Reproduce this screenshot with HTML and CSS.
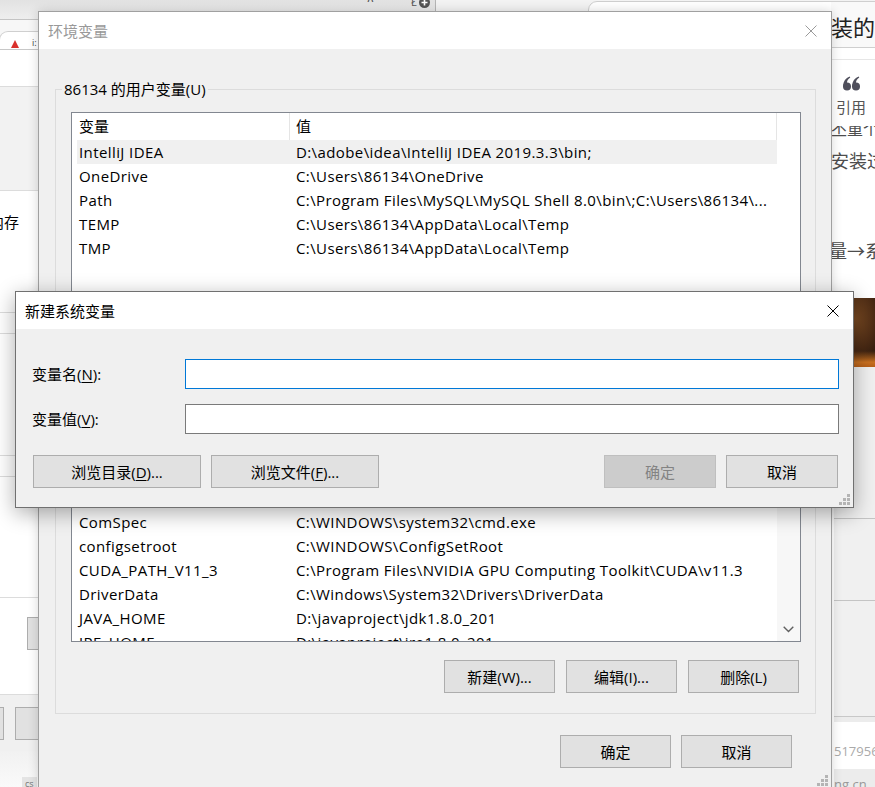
FILE: index.html
```html
<!DOCTYPE html>
<html lang="zh-CN">
<head>
<meta charset="utf-8">
<title>环境变量</title>
<link rel="stylesheet" href="styles.css">
</head>
<body>
<div class="bg-left">
  <div class="bl-top"><span class="bl-caret">∧</span><span class="bl-i">Ł</span><span class="bl-plus"><svg width="11" height="11" viewBox="0 0 11 11"><circle cx="5.5" cy="5.5" r="5.5" fill="#555"/><path d="M5.5 2.5v6M2.5 5.5h6" stroke="#fff" stroke-width="1.6"/></svg></span></div>
  <div class="bl-gap"></div>
  <div class="bl-tabrow"><div class="bl-tab"><svg class="bl-ico" width="8" height="8" viewBox="0 0 8 8"><path d="M4 0L8 8H0z" fill="#d9302c"/></svg><span class="bl-tabtxt">i:</span></div></div>
  <div class="bl-white1"></div>
  <div class="bl-gray1"></div>
  <div class="bl-sec1"><span class="bl-mem">内存</span></div>
  <div class="bl-thin"></div>
  <div class="bl-sec2"></div>
  <div class="bl-thin"></div>
  <div class="bl-sec3"></div>
  <div class="bl-sec4"><div class="bl-btn"></div></div>
  <div class="bl-band"><div class="bl-btn bl-btn-a"></div><div class="bl-btn bl-btn-b"></div></div>
  <div class="bl-foot"><span class="bl-cs">cs</span></div>
</div>

<div class="bg-browser">
  <div class="bb-col">
    <div class="bb-head">装的</div>
    <div class="bb-gap"></div>
    <div class="bb-quote">
      <svg class="bb-qicon" width="17" height="15" viewBox="0 0 17 15"><g fill="#4f4f5c"><circle cx="4" cy="10.6" r="4"/><path d="M0.2 10C0.2 5.2 2.8 2 6.6 0.4L7.3 1.6C4.9 3 3.9 5 4 7.2L0.6 11.2Z"/><circle cx="13" cy="10.6" r="4"/><path d="M9.2 10C9.2 5.2 11.8 2 15.6 0.4L16.3 1.6C13.9 3 12.9 5 13 7.2L9.6 11.2Z"/></g></svg>
      <div class="bb-qtxt">引用</div>
    </div>
    <div class="bb-clip"><div class="bb-cliptxt">丕重个</div></div>
    <div class="bb-line1">安装过</div>
    <div class="bb-line2">量→系</div>
    <div class="bb-img"></div>
    <div class="bb-g1"></div>
    <div class="bb-g2"></div>
    <div class="bb-g3"></div>
    <div class="bb-g4"></div>
    <div class="bb-box">517956</div>
    <div class="bb-end">ng.cn</div>
  </div>
</div>

<div class="win main">
  <div class="titlebar">
    <span class="title inactive">环境变量</span>
    <svg class="close" width="12" height="12" viewBox="0 0 12 12"><path d="M0.5 0.5L11.5 11.5M11.5 0.5L0.5 11.5" stroke="#9a9a9a" stroke-width="1"/></svg>
  </div>
  <div class="mbody">
    <div class="group">
      <div class="group-title">86134 的用户变量(U)</div>
      <div class="lv lv1">
        <div class="lv-main">
          <div class="lv-head"><div class="hc1">变量</div><div class="hc2">值</div></div>
          <div class="row sel"><div class="c1">IntelliJ IDEA</div><div class="c2">D:\adobe\idea\IntelliJ IDEA 2019.3.3\bin;</div></div>
          <div class="row"><div class="c1">OneDrive</div><div class="c2">C:\Users\86134\OneDrive</div></div>
          <div class="row"><div class="c1">Path</div><div class="c2">C:\Program Files\MySQL\MySQL Shell 8.0\bin\;C:\Users\86134\...</div></div>
          <div class="row"><div class="c1">TEMP</div><div class="c2">C:\Users\86134\AppData\Local\Temp</div></div>
          <div class="row"><div class="c1">TMP</div><div class="c2">C:\Users\86134\AppData\Local\Temp</div></div>
        </div>
        <div class="lv-side"></div>
      </div>
      <div class="gbtns gbtns1">
        <button class="btn">新建(N)...</button>
        <button class="btn">编辑(E)...</button>
        <button class="btn">删除(D)</button>
      </div>
    </div>

    <div class="group group2">
      <div class="group-title">系统变量(S)</div>
      <div class="lv lv2">
        <div class="lv-main">
          <div class="lv-head"><div class="hc1">变量</div><div class="hc2">值</div></div>
          <div class="row"><div class="c1">asl.log</div><div class="c2">Destination=file</div></div>
          <div class="row"><div class="c1">CLASSPATH</div><div class="c2">.;%JAVA_HOME%\lib;%JAVA_HOME%\lib\tools.jar</div></div>
          <div class="row"><div class="c1">ComSpec</div><div class="c2">C:\WINDOWS\system32\cmd.exe</div></div>
          <div class="row"><div class="c1">configsetroot</div><div class="c2">C:\WINDOWS\ConfigSetRoot</div></div>
          <div class="row"><div class="c1">CUDA_PATH_V11_3</div><div class="c2">C:\Program Files\NVIDIA GPU Computing Toolkit\CUDA\v11.3</div></div>
          <div class="row"><div class="c1">DriverData</div><div class="c2">C:\Windows\System32\Drivers\DriverData</div></div>
          <div class="row"><div class="c1">JAVA_HOME</div><div class="c2">D:\javaproject\jdk1.8.0_201</div></div>
          <div class="row"><div class="c1">JRE_HOME</div><div class="c2">D:\javaproject\jre1.8.0_201</div></div>
        </div>
        <div class="lv-side lv-sb">
          <svg class="chev" width="11" height="7" viewBox="0 0 11 7"><path d="M0.7 0.7L5.5 5.5L10.3 0.7" fill="none" stroke="#606060" stroke-width="1.4"/></svg>
        </div>
      </div>
      <div class="gbtns gbtns2">
        <button class="btn">新建(W)...</button>
        <button class="btn">编辑(I)...</button>
        <button class="btn">删除(L)</button>
      </div>
    </div>

    <div class="foot">
      <button class="btn">确定</button>
      <button class="btn">取消</button>
    </div>
  </div>
  <svg class="grip grip-main" width="11" height="11" viewBox="0 0 11 11"><g fill="#b4b4b4"><rect x="8" y="0" width="3" height="3"/><rect x="4" y="4" width="3" height="3"/><rect x="8" y="4" width="3" height="3"/><rect x="0" y="8" width="3" height="3"/><rect x="4" y="8" width="3" height="3"/><rect x="8" y="8" width="3" height="3"/></g></svg>
</div>

<div class="win dlg">
  <div class="titlebar">
    <span class="title">新建系统变量</span>
    <svg class="close" width="12" height="12" viewBox="0 0 12 12"><path d="M0.5 0.5L11.5 11.5M11.5 0.5L0.5 11.5" stroke="#000" stroke-width="1"/></svg>
  </div>
  <div class="dbody">
    <div class="frow">
      <label class="flabel">变量名(<u>N</u>):</label>
      <div class="input focus"></div>
    </div>
    <div class="frow">
      <label class="flabel">变量值(<u>V</u>):</label>
      <div class="input"></div>
    </div>
    <div class="dbtns">
      <button class="btn wide">浏览目录(<u>D</u>)...</button>
      <button class="btn wide">浏览文件(<u>F</u>)...</button>
      <button class="btn mid disabled push">确定</button>
      <button class="btn mid">取消</button>
    </div>
  </div>
  <svg class="grip grip-dlg" width="11" height="11" viewBox="0 0 11 11"><g fill="#b4b4b4"><rect x="8" y="0" width="3" height="3"/><rect x="4" y="4" width="3" height="3"/><rect x="8" y="4" width="3" height="3"/><rect x="0" y="8" width="3" height="3"/><rect x="4" y="8" width="3" height="3"/><rect x="8" y="8" width="3" height="3"/></g></svg>
</div>
</body>
</html>
```

FILE: styles.css
```css
* { box-sizing: border-box; }
html, body { margin: 0; padding: 0; }
body {
  width: 875px;
  height: 787px;
  overflow: hidden;
  position: relative;
  background: #f3f3f3;
  font-family: "Open Sans", "Noto Sans CJK SC", sans-serif;
  font-size: 15px;
  color: #000;
}

/* ---------- background left window ---------- */
.bg-left {
  position: absolute;
  left: 0;
  top: 0;
  width: 436px;
  height: 787px;
  background: #fff;
  border-right: 1px solid #b5b5b5;
  display: flex;
  flex-direction: column;
}
.bl-top {
  height: 20px;
  flex: none;
  background: linear-gradient(#e2e2e2, #eeeeee);
  border-bottom: 1px solid #c4c4c4;
  position: relative;
}
.bl-caret { position: absolute; left: 366px; top: -9px; font-size: 12px; color: #555; font-family: "DejaVu Sans", sans-serif; }
.bl-i { position: absolute; left: 411px; top: -6px; font-size: 11px; color: #555; }
.bl-plus { position: absolute; left: 419px; top: -3px; line-height: 0; }
.bl-gap { height: 11px; flex: none; background: #f7f7f7; }
.bl-tabrow { height: 19px; flex: none; background: #f7f7f7; border-bottom: 1px solid #c8c8c8; }
.bl-tab {
  margin-left: -1px;
  width: 60px;
  height: 18px;
  border: 1px solid #cfcfcf;
  border-bottom: none;
  border-top-left-radius: 9px;
  background: #fff;
  display: flex;
  align-items: flex-end;
  padding: 0 0 1px 11px;
}
.bl-ico { display: block; margin-bottom: 0; }
.bl-tabtxt { font-size: 9px; line-height: 10px; color: #444; margin-left: 13px; }
.bl-white1 { height: 37px; flex: none; border-bottom: 1px solid #dcdcdc; }
.bl-gray1 { height: 104px; flex: none; background: #f2f2f2; border-bottom: 1px solid #dcdcdc; }
.bl-sec1 { height: 122px; flex: none; border-bottom: 1px solid #dcdcdc; padding-top: 21px; }
.bl-mem { display: block; margin-left: -11px; line-height: 20px; }
.bl-thin { height: 21px; flex: none; border-bottom: 1px solid #dcdcdc; }
.bl-sec2 { height: 122px; flex: none; border-bottom: 1px solid #dcdcdc; }
.bl-sec3 { height: 121px; flex: none; border-bottom: 1px solid #dcdcdc; }
.bl-sec4 { height: 96px; flex: none; padding: 19px 0 0 27px; }
.bl-btn { width: 100px; height: 33px; border: 1px solid #adadad; background: #e1e1e1; }
.bl-band {
  height: 57px;
  flex: none;
  background: #f0f0f0;
  border-top: 1px solid #dcdcdc;
  display: flex;
  gap: 11px;
  padding-top: 12px;
}
.bl-btn-a { width: 4px; border-left: none; }
.bl-foot { flex: 1; background: linear-gradient(#f1f1f1, #fafafa); position: relative; }
.bl-cs { position: absolute; left: 22px; top: 26px; font-size: 9px; color: #777; background: #e4e4e4; padding: 0 3px; }

/* ---------- background browser window ---------- */
.bg-browser {
  position: absolute;
  left: 588px;
  top: 1px;
  width: 300px;
  height: 800px;
  background: #fff;
  border: 1px solid #cfcfcf;
  border-top-left-radius: 9px;
  overflow: hidden;
}
.bb-col { margin-left: 242px; display: flex; flex-direction: column; }
.bb-head {
  height: 46px;
  background: #f9f9f9;
  border-bottom: 1px solid #cfcfcf;
  padding-top: 10px;
  font-size: 22px;
  line-height: 30px;
  color: #222;
  white-space: nowrap;
}
.bb-gap { height: 12px; border-bottom: 1px solid #e6e6e6; }
.bb-quote { height: 66px; padding-top: 16px; }
.bb-qicon { display: block; margin-left: 12px; }
.bb-qtxt { margin: 8px 0 0 5px; font-size: 15px; line-height: 16px; color: #555; }
.bb-clip { height: 12px; overflow: hidden; }
.bb-cliptxt { margin-top: -5px; font-size: 16px; line-height: 16px; color: #4d4d4d; white-space: nowrap; }
.bb-line1 { margin-top: 11px; font-size: 18px; line-height: 24px; color: #4d4d4d; white-space: nowrap; }
.bb-line2 { margin: 66px 0 0 -2px; font-size: 18px; line-height: 24px; color: #4d4d4d; white-space: nowrap; }
.bb-img {
  margin: 35px 0 0 3px;
  height: 69px;
  background: radial-gradient(ellipse at 40% 30%, #7a4a22 0%, #4a2a14 45%, #2e1a0e 70%),
              #3a2210;
  position: relative;
}
.bb-img::after {
  content: "";
  position: absolute;
  left: 0; right: 0; bottom: 0;
  height: 16px;
  background: linear-gradient(rgba(200,110,30,0), #c87020 70%, #b86018);
}
.bb-g1 { height: 152px; background: #f0f0f0; border-bottom: 1px solid #c4c4c4; margin-left: 3px; }
.bb-g2 { height: 82px; background: #f0f0f0; border-bottom: 1px solid #c4c4c4; margin-left: 3px; }
.bb-g3 { height: 116px; background: #f0f0f0; border-bottom: 1px solid #c8c8c8; margin-left: 3px; }
.bb-g4 { height: 5px; background: #ececec; margin-left: 3px; }
.bb-box {
  height: 47px;
  background: #fff;
  padding-top: 21px;
  font-size: 13px;
  line-height: 16px;
  color: #aaa;
  margin-left: 3px;
  white-space: nowrap;
}
.bb-end { height: 20px; background: #ececec; margin-left: 3px; padding-top: 7px; font-size: 13px; line-height: 16px; color: #999; }

/* ---------- windows ---------- */
.win {
  position: absolute;
  background: #f0f0f0;
  display: flex;
  flex-direction: column;
}
.titlebar {
  height: 37px;
  flex: none;
  background: #fff;
  display: flex;
  align-items: center;
  padding-left: 9px;
  padding-right: 14px;
}
.title { line-height: 20px; white-space: nowrap; }
.title.inactive { color: #999; }
.close { margin-left: auto; display: block; }

.main {
  left: 38px;
  top: 11px;
  width: 794px;
  height: 800px;
  border: 1px solid #a0a0a0;
  box-shadow: 0 0 10px rgba(0, 0, 0, 0.16);
}
.mbody { padding: 40px 15px 0 16px; }

.group {
  border: 1px solid #dcdcdc;
  padding: 0 14px 20px 15px;
}
.group2 { margin-top: 13px; }
.group-title {
  margin: -11px 0 0 -9px;
  padding: 0 2px;
  width: fit-content;
  height: 20px;
  line-height: 20px;
  background: #f0f0f0;
  white-space: nowrap;
}

.lv {
  margin-top: 13px;
  border: 1px solid #828790;
  background: #fff;
  display: flex;
  overflow: hidden;
}
.lv1 { height: 213px; }
.lv2 { height: 208px; }
.lv-main { flex: 1; min-width: 0; overflow: hidden; }
.lv-side { width: 23px; flex: none; }
.lv-sb {
  background: #f7f7f7;
  display: flex;
  flex-direction: column;
  justify-content: flex-end;
  align-items: center;
  padding: 0 1px 8px 0;
}
.chev { display: block; }
.lv-head { display: flex; height: 27px; line-height: 27px; white-space: nowrap; }
.hc1 { width: 218px; flex: none; padding-left: 7px; border-right: 1px solid #e5e5e5; }
.hc2 { flex: 1; padding-left: 6px; border-right: 1px solid #e5e5e5; }
.row { display: flex; height: 24px; line-height: 24px; margin-left: 5px; white-space: nowrap; letter-spacing: 0.4px; }
.row.sel { background: #f0f0f0; }
.c1 { width: 217px; flex: none; padding-left: 2px; overflow: hidden; }
.c2 { flex: 1; padding-left: 2px; overflow: hidden; }

.btn {
  width: 111px;
  height: 33px;
  flex: none;
  border: 1px solid #adadad;
  background: #e1e1e1;
  color: #000;
  font: inherit;
  line-height: 20px;
  padding: 0;
  margin: 0;
  display: flex;
  align-items: center;
  justify-content: center;
  white-space: nowrap;
}
.btn u { text-underline-offset: 2px; }
.gbtns { display: flex; justify-content: flex-end; gap: 11px; padding-right: 2px; }
.gbtns1 { margin-top: 19px; }
.gbtns2 { margin-top: 18px; }
.foot { display: flex; justify-content: flex-end; gap: 10px; margin-top: 21px; padding-right: 24px; }

.grip { position: absolute; display: block; }
.grip-main { left: 778px; top: 763px; }

/* ---------- dialog ---------- */
.dlg {
  left: 15px;
  top: 291px;
  width: 839px;
  height: 217px;
  border: 1px solid #707070;
  box-shadow: 0 5px 20px rgba(0, 0, 0, 0.33);
}
.dbody { padding: 30px 14px 0 16px; }
.frow { display: flex; align-items: center; height: 30px; }
.frow + .frow { margin-top: 15px; }
.flabel { width: 153px; flex: none; line-height: 20px; white-space: nowrap; }
.flabel u { text-underline-offset: 2px; }
.input { flex: 1; height: 30px; background: #fff; border: 1px solid #7a7a7a; }
.input.focus { border-color: #0078d7; }
.dbtns { display: flex; margin-top: 21px; padding: 0 1px; gap: 10px; }
.btn.wide { width: 168px; }
.btn.mid { width: 112px; }
.btn.push { margin-left: auto; }
.btn.disabled { background: #cccccc; border-color: #bfbfbf; color: #838383; }
.grip-dlg { left: 823px; top: 202px; }
```
